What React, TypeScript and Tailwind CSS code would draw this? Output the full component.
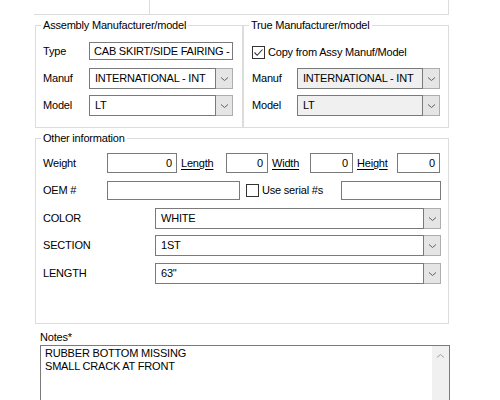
import React from 'react';

const font = { fontFamily: '"Liberation Sans", Arial, sans-serif' };

function Chevron({ up = false }: { up?: boolean }) {
  return (
    <svg width="9" height="6" viewBox="0 0 9 6" className={up ? 'rotate-180' : ''}>
      <path d="M1 1.5 L4.5 4.5 L8 1.5" fill="none" stroke={up ? '#a0a0a0' : '#606060'} strokeWidth="1" />
    </svg>
  );
}

function TextBox({ value = '', w, h = 'h-[20px]', right = false }: { value?: string; w: string; h?: string; right?: boolean }) {
  return (
    <div className={`${w} ${h} border border-[#7a7a7a] bg-white flex items-center px-[4px] whitespace-nowrap overflow-hidden ${right ? 'justify-end' : ''}`}>
      {value}
    </div>
  );
}

function Combo({ value, w, disabled = false }: { value: string; w: string; disabled?: boolean }) {
  return (
    <div className={`${w} h-[21px] flex`}>
      <div className={`flex-1 border border-[#7a7a7a] flex items-center px-[5px] whitespace-nowrap overflow-hidden ${disabled ? 'bg-[#f0f0f0]' : 'bg-white'}`}>
        {value}
      </div>
      <div className="w-[17px] border-y border-r border-[#adadad] bg-[#e5e5e5] flex items-center justify-center">
        <Chevron />
      </div>
    </div>
  );
}

function CheckBox({ checked = false }: { checked?: boolean }) {
  return (
    <div className="w-[13px] h-[13px] border border-[#333333] bg-white flex items-center justify-center">
      {checked && (
        <svg width="11" height="11" viewBox="0 0 11 11">
          <path d="M1.5 5.5 L4.2 8.3 L9.5 2.5" fill="none" stroke="#333333" strokeWidth="1.1" />
        </svg>
      )}
    </div>
  );
}

function GroupBox({ title, className, children }: { title: string; className: string; children: React.ReactNode }) {
  return (
    <div className={`relative border border-[#dcdcdc] ${className}`}>
      <span className="absolute -top-[8px] left-[5px] bg-white px-[2px] leading-[14px] whitespace-nowrap">{title}</span>
      {children}
    </div>
  );
}

function Link({ children, w }: { children: React.ReactNode; w: string }) {
  return <span className={`${w} underline underline-offset-2 pl-[4px]`}>{children}</span>;
}

export default function App() {
  return (
    <div className="w-[500px] h-[400px] bg-white overflow-hidden text-[11px] tracking-[-0.2px] text-black" style={font}>
      {/* top strip */}
      <div className="flex ml-[34px] h-[15px]">
        <div className="w-[116px] border-b border-r border-[#dcdcdc]" />
        <div className="w-[299px] border-b border-r border-[#dcdcdc]" />
      </div>

      {/* manufacturer groups */}
      <div className="flex ml-[35px] mt-[10px]">
        <GroupBox title="Assembly Manufacturer/model" className="w-[208px] h-[103px] pl-[7px]">
          <div className="flex items-center mt-[16px] h-[18px]">
            <span className="w-[46px]">Type</span>
            <TextBox value="CAB SKIRT/SIDE FAIRING -" w="w-[144px]" h="h-[18px]" />
          </div>
          <div className="flex items-center mt-[8px]">
            <span className="w-[46px]">Manuf</span>
            <Combo value="INTERNATIONAL - INT" w="w-[144px]" />
          </div>
          <div className="flex items-center mt-[6px]">
            <span className="w-[46px]">Model</span>
            <Combo value="LT" w="w-[144px]" />
          </div>
        </GroupBox>
        <GroupBox title="True Manufacturer/model" className="w-[206px] h-[103px] pl-[8px]">
          <div className="flex items-center mt-[20px] h-[13px] gap-[3px]">
            <CheckBox checked />
            <span>Copy from Assy Manuf/Model</span>
          </div>
          <div className="flex items-center mt-[9px]">
            <span className="w-[45px]">Manuf</span>
            <Combo value="INTERNATIONAL - INT" w="w-[143px]" disabled />
          </div>
          <div className="flex items-center mt-[6px]">
            <span className="w-[45px]">Model</span>
            <Combo value="LT" w="w-[143px]" disabled />
          </div>
        </GroupBox>
      </div>

      {/* other information */}
      <GroupBox title="Other information" className="ml-[35px] mt-[10px] w-[414px] h-[186px] pl-[7px]">
        <div className="flex items-center mt-[14px]">
          <span className="w-[64px]">Weight</span>
          <TextBox value="0" w="w-[70px]" right />
          <Link w="w-[49px]">Length</Link>
          <TextBox value="0" w="w-[42px]" right />
          <Link w="w-[42px]">Width</Link>
          <TextBox value="0" w="w-[43px]" right />
          <Link w="w-[44px]">Height</Link>
          <TextBox value="0" w="w-[43px]" right />
        </div>
        <div className="flex items-center mt-[8px]">
          <span className="w-[64px]">OEM #</span>
          <TextBox w="w-[133px]" h="h-[19px]" />
          <div className="ml-[6px] flex items-center gap-[3px] w-[95px]">
            <CheckBox />
            <span>Use serial #s</span>
          </div>
          <TextBox w="w-[100px]" h="h-[19px]" />
        </div>
        {[
          ['COLOR', 'WHITE', 'mt-[8px]'],
          ['SECTION', '1ST', 'mt-[6px]'],
          ['LENGTH', '63"', 'mt-[7px]'],
        ].map(([label, value, mt]) => (
          <div key={label} className={`flex items-center ${mt}`}>
            <span className="w-[112px]">{label}</span>
            <Combo value={value} w="w-[286px]" />
          </div>
        ))}
      </GroupBox>

      {/* notes */}
      <div className="ml-[40px] mt-[6px] leading-[14px]">Notes*</div>
      <div className="ml-[40px] mt-[1px] w-[410px] h-[70px] border border-[#7a7a7a] flex">
        <div className="flex-1 pl-[4px] pt-[1px] leading-[13px]">
          <div>RUBBER BOTTOM MISSING</div>
          <div>SMALL CRACK AT FRONT</div>
        </div>
        <div className="w-[17px] bg-[#f0f0f0] flex justify-center pt-[7px]">
          <Chevron up />
        </div>
      </div>
    </div>
  );
}
